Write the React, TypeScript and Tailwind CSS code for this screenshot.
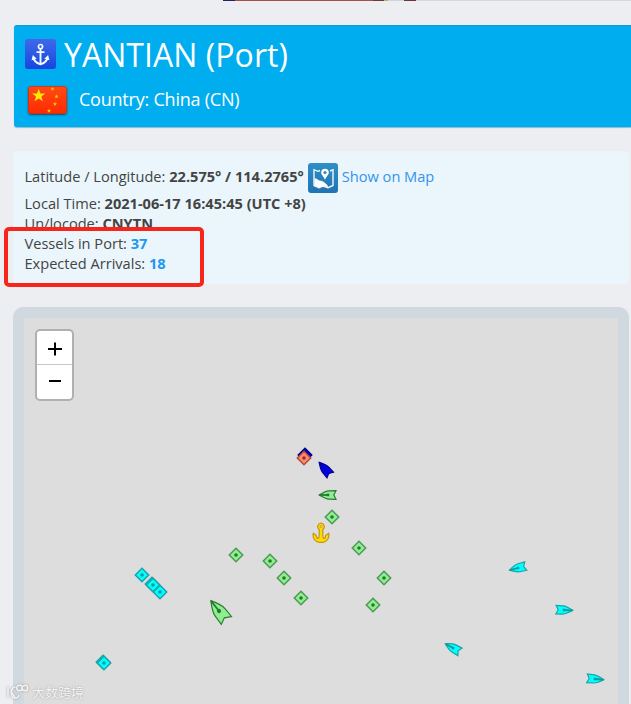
import React from 'react'

type Tone = 'green' | 'cyan' | 'navy' | 'red'

const tones: Record<Tone, { fill: string; stroke: string; dot: string }> = {
  green: { fill: '#90ee90', stroke: '#4c9a56', dot: '#227a2e' },
  cyan: { fill: '#00ffff', stroke: '#1aa4a8', dot: '#0c9aa0' },
  navy: { fill: '#0000c0', stroke: '#000088', dot: '#0000b8' },
  red: { fill: '#ff8a70', stroke: '#b04a3c', dot: '#9c2f22' },
}

// positions are relative to the map canvas
const moored: { x: number; y: number; tone: Tone }[] = [
  { x: 281, y: 136.7, tone: 'navy' },
  { x: 280, y: 140, tone: 'red' },
  { x: 308.3, y: 199, tone: 'green' },
  { x: 335.3, y: 229.5, tone: 'green' },
  { x: 211.5, y: 237.3, tone: 'green' },
  { x: 246.3, y: 243, tone: 'green' },
  { x: 259.8, y: 260, tone: 'green' },
  { x: 276.7, y: 280.2, tone: 'green' },
  { x: 360, y: 260, tone: 'green' },
  { x: 348.7, y: 286.8, tone: 'green' },
  { x: 118, y: 256.5, tone: 'cyan' },
  { x: 128.2, y: 265.5, tone: 'cyan' },
  { x: 129.4, y: 266.8, tone: 'cyan' },
  { x: 136.2, y: 273.5, tone: 'cyan' },
  { x: 79, y: 344.2, tone: 'cyan' },
  { x: 80, y: 345.2, tone: 'cyan' },
]

const sailing: { x: number; y: number; angle: number; size: number; tone: Tone }[] = [
  { x: 300.7, y: 151.3, angle: -41, size: 1, tone: 'navy' },
  { x: 304, y: 176.6, angle: -90, size: 1, tone: 'green' },
  { x: 195.3, y: 293, angle: -38, size: 1.5, tone: 'green' },
  { x: 493.8, y: 250, angle: -104, size: 1, tone: 'cyan' },
  { x: 540.3, y: 292.3, angle: 92, size: 1, tone: 'cyan' },
  { x: 428.8, y: 330.3, angle: -61, size: 1, tone: 'cyan' },
  { x: 570.5, y: 360.8, angle: 95, size: 1, tone: 'cyan' },
]

const Diamond: React.FC<{ x: number; y: number; tone: Tone }> = ({ x, y, tone }) => {
  const c = tones[tone]
  return (
    <svg
      className="absolute h-4 w-4 -translate-x-1/2 -translate-y-1/2"
      style={{ left: x, top: y }}
      viewBox="-8 -8 16 16"
    >
      <path d="M0-6.7 6.7 0 0 6.7-6.7 0Z" fill={c.fill} stroke={c.stroke} strokeWidth="1.5" />
      <circle r="1.8" fill={c.dot} />
    </svg>
  )
}

const Vessel: React.FC<{ x: number; y: number; angle: number; size: number; tone: Tone }> = ({
  x,
  y,
  angle,
  size,
  tone,
}) => {
  const c = tones[tone]
  return (
    <svg
      className="absolute h-8 w-8 -translate-x-1/2 -translate-y-1/2 overflow-visible"
      style={{ left: x, top: y }}
      viewBox="-16 -16 32 32"
    >
      <g transform={`rotate(${angle}) scale(${size})`}>
        <path
          d="M0-8.8C2-5.5 4-2 4.1 1L4.3 8 0 5.8-4.3 8-4.1 1C-4-2-2-5.5 0-8.8Z"
          fill={tone === 'navy' ? '#0000f0' : c.fill}
          stroke={tone === 'green' ? '#2b7a34' : c.stroke}
          strokeWidth={1.2 / size}
        />
        <path d="M0-8.5V0" stroke={c.dot} strokeWidth={1.8 / size} />
        <circle r="1.4" fill={c.dot} />
      </g>
    </svg>
  )
}

const PortBadge = () => (
  <div className="flex h-[30px] w-[31px] shrink-0 items-center justify-center rounded-[3px] bg-linear-to-b from-[#4068e8] to-[#1546e0]">
    <svg className="h-[23px] w-[19px]" viewBox="0 0 20 24" fill="none" stroke="#f2fbff">
      <circle cx="10" cy="3.7" r="2.2" strokeWidth="1.7" />
      <path d="M10 6v16M5.8 9.5h8.4" strokeWidth="2" />
      <path d="M2.6 15c.4 4 3.5 6 7.4 7.3 3.9-1.3 7-3.3 7.4-7.3" strokeWidth="2.1" />
      <path d="M.6 18 2 12.6l4 4ZM19.4 18 18 12.6l-4 4Z" fill="#f2fbff" stroke="none" />
    </svg>
  </div>
)

const star = 'M0-1 .24-.32.95-.31.38.12.59.81 0 .4-.59.81-.38.12-.95-.31-.24-.32Z'

const smallStars = [
  [24.5, 3],
  [28.5, 10.5],
  [27, 18],
  [21, 24.8],
]

const ChinaFlag = () => (
  <svg className="h-7 w-[39px] shrink-0 rounded-[3px] shadow-[0_1px_2px_#23485f]" viewBox="0 0 39 28">
    <defs>
      <linearGradient id="flagRed" x2="0" y2="1">
        <stop stopColor="#ff4b16" />
        <stop offset="1" stopColor="#ff2a00" />
      </linearGradient>
    </defs>
    <rect width="39" height="28" rx="3" fill="url(#flagRed)" />
    <rect x=".5" y=".5" width="38" height="27" rx="2.5" fill="none" stroke="#a83b26" strokeOpacity=".7" />
    <path d={star} fill="#ffea00" transform="translate(10.7 9.7) scale(7)" />
    {smallStars.map(([x, y]) => (
      <path key={y} d={star} fill="#ffc400" transform={`translate(${x} ${y}) scale(2.3)`} />
    ))}
  </svg>
)

const MapButton = () => (
  <svg className="h-[30px] w-[30px] shrink-0" viewBox="0 0 30 30">
    <defs>
      <linearGradient id="mapBlue" x2="0" y2="1">
        <stop stopColor="#2f8fc6" />
        <stop offset="1" stopColor="#2073b2" />
      </linearGradient>
    </defs>
    <rect width="30" height="30" rx="3" fill="url(#mapBlue)" />
    <path
      d="M12 7.5 10 8.3 6 6.7V22.5l5 2.2 4-1.5 5 1.5 5-2.2V6.7l-3 1.3"
      fill="none"
      stroke="#eefaff"
      strokeWidth="1.4"
    />
    <path d="M6.5 15.5c2.8-.7 3.7 2.2 6.5 2.2 2.5 0 3.8 2.5 6.3 4.3l.8 2.3-5.1-1.5-4 1.6-4.5-2Z" fill="#fff" />
    <path
      d="M17 5.7a3.8 3.8 0 0 0-3.8 3.8c0 2.5 2.5 4 3.8 7.3 1.3-3.3 3.8-4.8 3.8-7.3A3.8 3.8 0 0 0 17 5.7Zm0 2.2a1.6 1.6 0 1 1 0 3.2 1.6 1.6 0 0 1 0-3.2Z"
      fill="#fff"
      fillRule="evenodd"
    />
  </svg>
)

const AnchorPin = () => (
  <svg
    className="absolute top-[215px] left-[297.3px] h-[22px] w-[18px] -translate-x-1/2 -translate-y-1/2"
    viewBox="0 0 18 22"
  >
    <path
      d="M9 1a3.6 3.6 0 0 0-1.8 6.5v6.3c0 1.4-.4 2.4-1.4 2.8-1.1-.5-1.5-1.6-1.5-3L1.4 11.2c-.7 2.8-.1 5.3 1.5 7 1.4 1.4 2.6 2.2 4.3 2.2h3.6c1.7 0 2.9-.8 4.3-2.2 1.6-1.7 2.2-4.2 1.5-7l-2.9 2.4c0 1.4-.4 2.5-1.5 3-1-.4-1.4-1.4-1.4-2.8V7.5A3.6 3.6 0 0 0 9 1Z"
      fill="#ffdc00"
      stroke="#c0941a"
      strokeWidth="1.2"
    />
    <circle cx="9" cy="4.5" r="1.1" fill="#e8d890" stroke="#c79c1c" strokeWidth=".8" />
  </svg>
)

const ZoomControl = () => (
  <div className="absolute top-[11px] left-[11px] flex h-[72px] w-[39px] flex-col rounded-[5px] border-[2.5px] border-[#b0b0b0] bg-white">
    <button className="flex h-[34px] items-center justify-center border-b border-[#c6c6c6] pt-[3px]" aria-label="Zoom in">
      <svg className="h-4 w-4" viewBox="0 0 16 16" stroke="#000" strokeWidth="2">
        <path d="M1 8h14M8 1.5v13" />
      </svg>
    </button>
    <button className="flex flex-1 items-center justify-center pb-[2px]" aria-label="Zoom out">
      <svg className="h-4 w-4" viewBox="0 0 16 16" stroke="#000" strokeWidth="2">
        <path d="M2 8h12" />
      </svg>
    </button>
  </div>
)

const Watermark = () => (
  <div className="absolute bottom-1 left-[7px] flex items-center gap-[3px] text-[#f4f4f4] [text-shadow:0_0_2px_#999]">
    <svg className="h-4 w-[22px] drop-shadow-[0_0_1px_#999]" viewBox="0 0 22 16" fill="none" stroke="#f4f4f4" strokeWidth="1.4">
      <path d="M1 2.5v11M8.5 3C3 3.5 3 13.5 7.5 14c2.5.3 4-1 4.5-3M4 8l4 5" />
      <circle cx="12.5" cy="4" r="2.8" />
      <circle cx="18" cy="4" r="2.8" />
    </svg>
    <span className="font-['Noto_Sans_CJK_SC',sans-serif] text-[13px] leading-4 whitespace-nowrap">大数跨境</span>
  </div>
)

const App: React.FC = () => {
  return (
    <div className="flex h-[704px] w-[631px] flex-col overflow-hidden bg-[#edeef2] font-['Open_Sans',sans-serif] text-[#444]">
      <div className="flex h-px shrink-0">
        <div className="w-[223px]" />
        <div className="w-3 bg-[#20236b]" />
        <div className="w-[138px] bg-[#a94f45]" />
        <div className="w-[11px] bg-[#6b3b31]" />
        <div className="w-1 bg-[#c9ac72]" />
        <div className="w-4 bg-[#ccd5dd]" />
        <div className="w-3 bg-[#6b3538]" />
        <div className="flex-1 bg-[#d8d8da]" />
      </div>

      <header className="mt-6 ml-3.5 h-[102px] shrink-0 rounded-l-[3px] border-t border-[#109bd2] bg-[#00adef] pt-[13px] pl-[11px] text-white shadow-[0_1px_1px_#8fb9cf]">
        <div className="flex h-[30px] items-center gap-2">
          <PortBadge />
          <h1 className="pt-px text-[32px] leading-[30px] tracking-[0.05px] whitespace-nowrap">YANTIAN (Port)</h1>
        </div>
        <div className="mt-[17px] ml-[3px] flex h-7 items-center gap-3">
          <ChinaFlag />
          <span className="pb-0.5 text-[18px] tracking-[-0.22px] whitespace-nowrap">Country: China (CN)</span>
        </div>
      </header>

      <div className="relative mt-6 ml-[13px] h-[133px] w-[616px] shrink-0 rounded-[5px] bg-[#eaf6fb] pt-3 pl-[11.5px] text-[14.6px] leading-5 whitespace-nowrap">
        <div className="flex h-[30px] items-center gap-1">
          <span className="pb-[5px]">
            Latitude / Longitude: <b>22.575° / 114.2765°</b>
          </span>
          <MapButton />
          <a className="pb-[5px] text-[#3493ec]">Show on Map</a>
        </div>
        <p>
          Local Time: <b>2021-06-17 16:45:45 (UTC +8)</b>
        </p>
        <p>
          Un/locode: <b>CNYTN</b>
        </p>
        <p>
          Vessels in Port: <b className="text-[#2196f3]">37</b>
        </p>
        <p>
          Expected Arrivals: <b className="text-[#2196f3]">18</b>
        </p>
        <div className="absolute top-[76px] -left-[9px] h-[60px] w-[200px] rounded-[5px] border-4 border-[#f8251b]" />
      </div>

      <div className="mt-[23px] ml-[13px] w-[616px] flex-1 rounded-t-[10px] bg-[#d0d8e0] pt-[11px] pr-[11.5px] pl-[11px]">
        <div className="relative h-full bg-[#ddd]">
          <ZoomControl />
          {moored.map((m, i) => (
            <Diamond key={i} {...m} />
          ))}
          {sailing.map((v, i) => (
            <Vessel key={i} {...v} />
          ))}
          <AnchorPin />
          <div className="absolute bottom-0 -left-6">
            <Watermark />
          </div>
        </div>
      </div>
    </div>
  )
}

export default App
